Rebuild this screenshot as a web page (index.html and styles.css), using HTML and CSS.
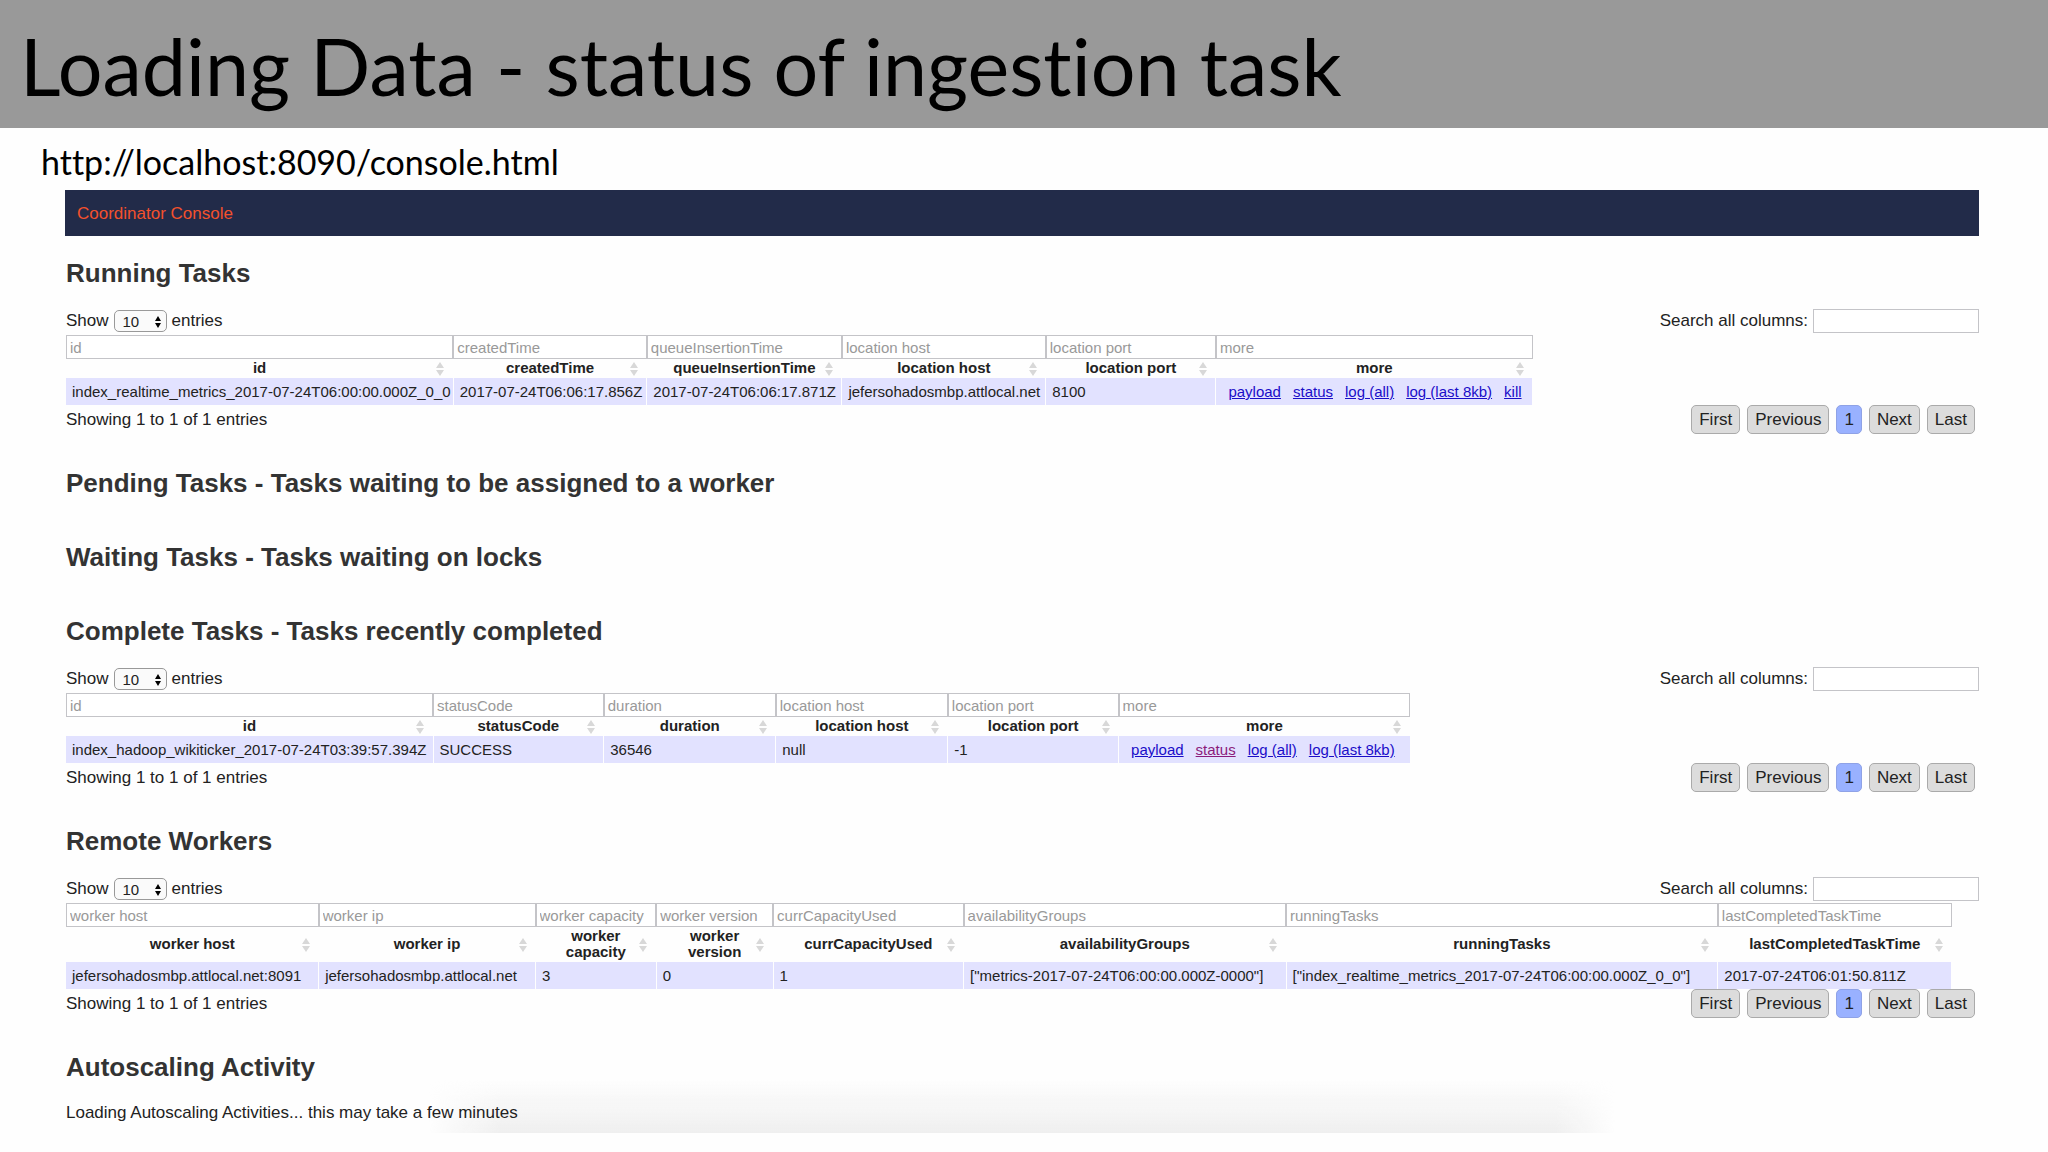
FILE: index.html
```html
<!DOCTYPE html>
<html lang="en">
    <head>
        <meta charset="utf-8">
        <meta name="viewport" content="width=device-width, initial-scale=1.0">
        <title>Loading Data - status of ingestion task</title>

        <link rel="stylesheet" href="styles.css">
    </head>
    <body>
        <svg class="symbols" aria-hidden="true">
            <symbol id="arrows" viewBox="0 0 6 12">
                <path d="M3 0 6 5H0zM3 12 0 7H6z"/>
            </symbol>
        </svg>

        <header class="title">
            <h1>Loading Data - status of ingestion task</h1>
        </header>

        <main>
            <p class="url">http://localhost:8090/console.html</p>

            <div class="console">
                <div class="heading">Coordinator Console</div>

                <section class="running">
                    <h2>Running Tasks</h2>
                    <div class="controls">
                        <label>Show
                            <span class="select">
                                <select><option>10</option><option>25</option><option>50</option></select>
                                <svg><use href="#arrows"/></svg>
                            </span>
                            entries
                        </label>
                        <label>Search all columns: <input type="text" class="search"></label>
                    </div>
                    <table>
                        <thead>
                            <tr class="filters">
                                <td><input type="text" placeholder="id" aria-label="id"></td>
                                <td><input type="text" placeholder="createdTime" aria-label="createdTime"></td>
                                <td><input type="text" placeholder="queueInsertionTime" aria-label="queueInsertionTime"></td>
                                <td><input type="text" placeholder="location host" aria-label="location host"></td>
                                <td><input type="text" placeholder="location port" aria-label="location port"></td>
                                <td><input type="text" placeholder="more" aria-label="more"></td>
                            </tr>
                            <tr>
                                <th>id</th>
                                <th>createdTime</th>
                                <th>queueInsertionTime</th>
                                <th>location host</th>
                                <th>location port</th>
                                <th>more</th>
                            </tr>
                        </thead>
                        <tbody>
                            <tr>
                                <td>index_realtime_metrics_2017-07-24T06:00:00.000Z_0_0</td>
                                <td>2017-07-24T06:06:17.856Z</td>
                                <td>2017-07-24T06:06:17.871Z</td>
                                <td>jefersohadosmbp.attlocal.net</td>
                                <td>8100</td>
                                <td class="more">
                                    <a href="#payload">payload</a><a href="#status">status</a><a href="#log">log (all)</a><a href="#tail">log (last 8kb)</a><a href="#kill">kill</a>
                                </td>
                            </tr>
                        </tbody>
                    </table>
                    <div class="footer">
                        <span>Showing 1 to 1 of 1 entries</span>
                        <div class="pager">
                            <button type="button">First</button>
                            <button type="button">Previous</button>
                            <button type="button" class="active">1</button>
                            <button type="button">Next</button>
                            <button type="button">Last</button>
                        </div>
                    </div>
                </section>

                <section class="empty">
                    <h2>Pending Tasks - Tasks waiting to be assigned to a worker</h2>
                </section>

                <section class="empty">
                    <h2>Waiting Tasks - Tasks waiting on locks</h2>
                </section>

                <section class="complete">
                    <h2>Complete Tasks - Tasks recently completed</h2>
                    <div class="controls">
                        <label>Show
                            <span class="select">
                                <select><option>10</option><option>25</option><option>50</option></select>
                                <svg><use href="#arrows"/></svg>
                            </span>
                            entries
                        </label>
                        <label>Search all columns: <input type="text" class="search"></label>
                    </div>
                    <table>
                        <thead>
                            <tr class="filters">
                                <td><input type="text" placeholder="id" aria-label="id"></td>
                                <td><input type="text" placeholder="statusCode" aria-label="statusCode"></td>
                                <td><input type="text" placeholder="duration" aria-label="duration"></td>
                                <td><input type="text" placeholder="location host" aria-label="location host"></td>
                                <td><input type="text" placeholder="location port" aria-label="location port"></td>
                                <td><input type="text" placeholder="more" aria-label="more"></td>
                            </tr>
                            <tr>
                                <th>id</th>
                                <th>statusCode</th>
                                <th>duration</th>
                                <th>location host</th>
                                <th>location port</th>
                                <th>more</th>
                            </tr>
                        </thead>
                        <tbody>
                            <tr>
                                <td>index_hadoop_wikiticker_2017-07-24T03:39:57.394Z</td>
                                <td>SUCCESS</td>
                                <td>36546</td>
                                <td>null</td>
                                <td>-1</td>
                                <td class="more">
                                    <a href="#payload">payload</a><a href="#status" class="seen">status</a><a href="#log">log (all)</a><a href="#tail">log (last 8kb)</a>
                                </td>
                            </tr>
                        </tbody>
                    </table>
                    <div class="footer">
                        <span>Showing 1 to 1 of 1 entries</span>
                        <div class="pager">
                            <button type="button">First</button>
                            <button type="button">Previous</button>
                            <button type="button" class="active">1</button>
                            <button type="button">Next</button>
                            <button type="button">Last</button>
                        </div>
                    </div>
                </section>

                <section class="workers">
                    <h2>Remote Workers</h2>
                    <div class="controls">
                        <label>Show
                            <span class="select">
                                <select><option>10</option><option>25</option><option>50</option></select>
                                <svg><use href="#arrows"/></svg>
                            </span>
                            entries
                        </label>
                        <label>Search all columns: <input type="text" class="search"></label>
                    </div>
                    <table>
                        <thead>
                            <tr class="filters">
                                <td><input type="text" placeholder="worker host" aria-label="worker host"></td>
                                <td><input type="text" placeholder="worker ip" aria-label="worker ip"></td>
                                <td><input type="text" placeholder="worker capacity" aria-label="worker capacity"></td>
                                <td><input type="text" placeholder="worker version" aria-label="worker version"></td>
                                <td><input type="text" placeholder="currCapacityUsed" aria-label="currCapacityUsed"></td>
                                <td><input type="text" placeholder="availabilityGroups" aria-label="availabilityGroups"></td>
                                <td><input type="text" placeholder="runningTasks" aria-label="runningTasks"></td>
                                <td><input type="text" placeholder="lastCompletedTaskTime" aria-label="lastCompletedTaskTime"></td>
                            </tr>
                            <tr>
                                <th>worker host</th>
                                <th>worker ip</th>
                                <th>worker capacity</th>
                                <th>worker version</th>
                                <th>currCapacityUsed</th>
                                <th>availabilityGroups</th>
                                <th>runningTasks</th>
                                <th>lastCompletedTaskTime</th>
                            </tr>
                        </thead>
                        <tbody>
                            <tr>
                                <td>jefersohadosmbp.attlocal.net:8091</td>
                                <td>jefersohadosmbp.attlocal.net</td>
                                <td>3</td>
                                <td>0</td>
                                <td>1</td>
                                <td>["metrics-2017-07-24T06:00:00.000Z-0000"]</td>
                                <td>["index_realtime_metrics_2017-07-24T06:00:00.000Z_0_0"]</td>
                                <td>2017-07-24T06:01:50.811Z</td>
                            </tr>
                        </tbody>
                    </table>
                    <div class="footer">
                        <span>Showing 1 to 1 of 1 entries</span>
                        <div class="pager">
                            <button type="button">First</button>
                            <button type="button">Previous</button>
                            <button type="button" class="active">1</button>
                            <button type="button">Next</button>
                            <button type="button">Last</button>
                        </div>
                    </div>
                </section>

                <section class="autoscaling">
                    <h2>Autoscaling Activity</h2>
                    <p>Loading Autoscaling Activities... this may take a few minutes</p>
                </section>
            </div>
        </main>
    </body>
</html>
```

FILE: styles.css
```css
* {
    box-sizing: border-box;
}
body {
    margin: 0;
    background: #fefefe;
    color: #222;
    font-family: "Liberation Sans", Arial, sans-serif;
    font-size: 17px;
    line-height: 20px;
}
h1, h2, p {
    margin: 0;
}
.symbols {
    display: none;
}

/* Slide title */
.title {
    padding: 18px 20px 14px;
    background: #999;
    color: #000;
}
h1 {
    font-family: Lato, sans-serif;
    font-size: 79px;
    font-weight: 400;
    font-variant-ligatures: none;
    line-height: 96px;
}
.url {
    padding: 12px 41px 6px;
    color: #000;
    font-family: Lato, sans-serif;
    font-size: 34px;
    font-variant-ligatures: none;
    line-height: 44px;
}

/* Console */
.console {
    padding: 0 69px 0 65px;
}
.heading {
    margin-bottom: 22px;
    padding: 14px 12px 12px;
    background: #222b49;
    color: #f4512c;
}
section {
    margin-bottom: 34px;
    padding-left: 1px;
}
h2 {
    margin-bottom: 21px;
    color: #333;
    font-size: 26px;
    line-height: 30px;
}
.empty {
    margin-bottom: 44px;
}
.empty h2 {
    margin-bottom: 0;
}
.controls, .footer {
    display: flex;
    justify-content: space-between;
    align-items: center;
}
.controls {
    margin-bottom: 2px;
}
.controls label {
    display: flex;
    align-items: center;
    gap: 5px;
}
.select {
    position: relative;
    display: flex;
}
.select svg {
    position: absolute;
    right: 6px;
    top: 6px;
    width: 6px;
    height: 12px;
    pointer-events: none;
}
select {
    appearance: none;
    width: 53px;
    height: 22px;
    padding: 0 8px;
    border: 1px solid #999;
    border-radius: 5px;
    background: #fafafa;
    color: #222;
    font-family: inherit;
    font-size: 15px;
}
input {
    height: 24px;
    border: 1px solid #c4c4c8;
    border-radius: 0;
    background: #fff;
    font-family: inherit;
    font-size: 15px;
}
.search {
    width: 166px;
}

/* Tables */
table {
    border-collapse: collapse;
    table-layout: fixed;
    font-size: 15px;
}
.filters td {
    padding: 0;
}
.filters input {
    display: block;
    width: 100%;
    padding: 0 3px;
}
input::placeholder {
    color: #999;
}
th {
    position: relative;
    padding: 1px 20px 2px;
    line-height: 16px;
}
th::before, th::after {
    content: "";
    position: absolute;
    right: 9px;
    border: 4px solid transparent;
}
th::before {
    bottom: 50%;
    border-top-width: 0;
    border-bottom: 6px solid #d8d8d8;
    margin-bottom: 1px;
}
th::after {
    top: 50%;
    border-bottom-width: 0;
    border-top: 6px solid #d8d8d8;
    margin-top: 1px;
}
tbody td {
    padding: 5px 6px;
    border-right: 1px solid #fefefe;
    background: #e2e2ff;
    line-height: 17px;
    white-space: nowrap;
}
.more a {
    margin: 0 6px;
    color: #1a0dc8;
}
.more .seen {
    color: #8b1a7b;
}

.running table {
    width: 76.7%;
}
.running .filters td:nth-child(1) { width: 26.4%; }
.running .filters td:nth-child(2) { width: 13.2%; }
.running .filters td:nth-child(3) { width: 13.3%; }
.running .filters td:nth-child(4) { width: 13.9%; }
.running .filters td:nth-child(5) { width: 11.6%; }

.complete table {
    width: 70.3%;
}
.complete .filters td:nth-child(1) { width: 27.3%; }
.complete .filters td:nth-child(2) { width: 12.7%; }
.complete .filters td:nth-child(3) { width: 12.8%; }
.complete .filters td:nth-child(4) { width: 12.8%; }
.complete .filters td:nth-child(5) { width: 12.7%; }

.workers table {
    width: 98.6%;
}
.workers .filters td:nth-child(1) { width: 13.4%; }
.workers .filters td:nth-child(2) { width: 11.5%; }
.workers .filters td:nth-child(3) { width: 6.4%; }
.workers .filters td:nth-child(4) { width: 6.2%; }
.workers .filters td:nth-child(5) { width: 10.1%; }
.workers .filters td:nth-child(6) { width: 17.1%; }
.workers .filters td:nth-child(7) { width: 22.9%; }

/* Pager */
.pager {
    display: flex;
    gap: 7px;
    padding-right: 4px;
}
button {
    height: 29px;
    padding: 0 7px;
    border: 1px solid #aaa;
    border-radius: 5px;
    background: #dcdcdc;
    color: #222;
    font-family: inherit;
    font-size: 17px;
    cursor: pointer;
}
.active {
    border-color: #8fa2e6;
    background: #99b1ff;
}

/* Soft shadow along the bottom edge of the console */
.autoscaling {
    position: relative;
    margin-bottom: 0;
    padding-bottom: 10px;
}
.autoscaling::before {
    content: "";
    position: absolute;
    z-index: -1;
    left: 19%;
    right: 19%;
    bottom: 0;
    height: 54px;
    background: linear-gradient(transparent, #efefef);
    mask-image: linear-gradient(90deg, transparent, #000 6%, #000 95%, transparent);
}
```
